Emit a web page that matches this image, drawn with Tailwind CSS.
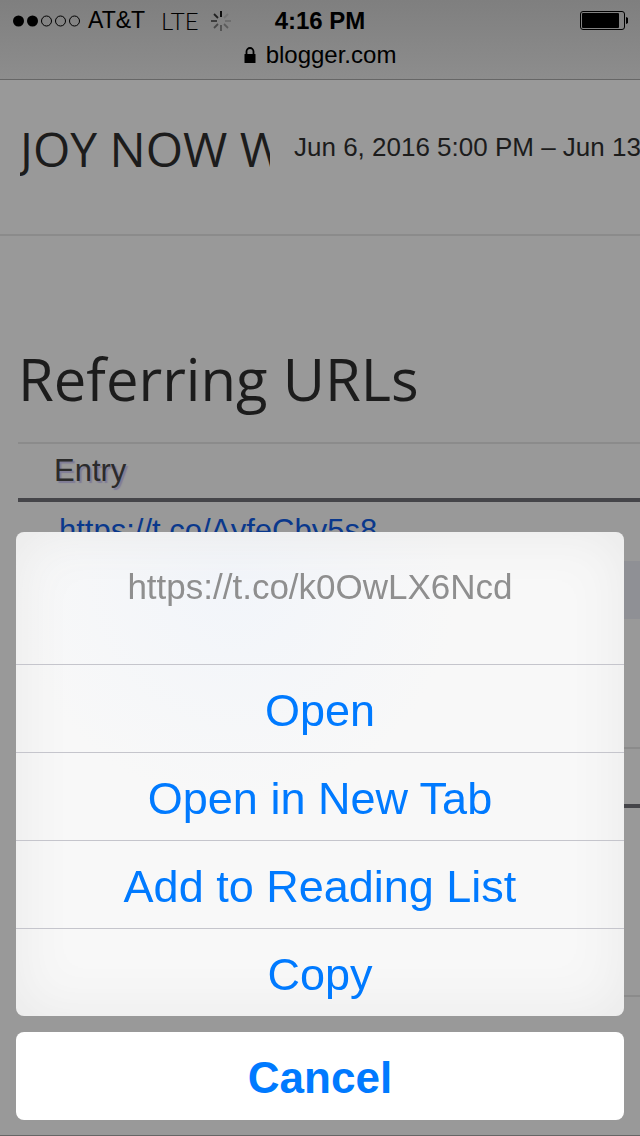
<!DOCTYPE html>
<html lang="en">
<head>
  <meta charset="UTF-8">
  <meta name="viewport" content="width=device-width, initial-scale=1">
  <title>Blogger Stats</title>
  <script src="https://cdn.jsdelivr.net/npm/@tailwindcss/browser@4"></script>
</head>
<body class="bg-[#999] font-['Liberation_Sans',Arial,sans-serif] text-[#1c1c1c] overflow-hidden">

  <div class="h-screen flex flex-col overflow-hidden">
    <!-- Status bar + address -->
    <header class="shrink-0 h-20 bg-linear-to-b from-[#7f7f7f] to-[#8d8d8d] border-b border-[#666] text-black text-2xl">
      <div class="grid grid-cols-[1fr_auto_1fr] items-center h-[41px] pl-3 pr-3">
        <div class="flex items-center">
          <svg class="w-[70px] h-3 mr-1.5" viewBox="0 0 70 12" fill="none" stroke="#000">
            <circle cx="6.5" cy="6" r="5.5" fill="#000" stroke="none"/>
            <circle cx="20.5" cy="6" r="5.5" fill="#000" stroke="none"/>
            <circle cx="34.5" cy="6" r="5"/>
            <circle cx="48.5" cy="6" r="5"/>
            <circle cx="62.5" cy="6" r="5"/>
          </svg>
          <span class="text-[23px]">AT&amp;T</span>
          <span class="ml-4 font-['Lato',sans-serif] font-light">LTE</span>
          <svg class="w-5 h-5 ml-3" viewBox="0 0 20 20" stroke="#000" stroke-width="1.8">
            <path d="M10 0v6"/>
            <path d="M17 3l-4 4" stroke-opacity=".12"/>
            <path d="M20 10h-6" stroke-opacity=".18"/>
            <path d="M17 17l-4-4" stroke-opacity=".3"/>
            <path d="M10 20v-6" stroke-opacity=".4"/>
            <path d="M3 17l4-4" stroke-opacity=".45"/>
            <path d="M0 10h6" stroke-opacity=".6"/>
            <path d="M3 3l4 4" stroke-opacity=".75"/>
          </svg>
        </div>
        <span class="font-bold">4:16 PM</span>
        <svg class="justify-self-end w-12 h-[19px]" viewBox="0 0 48 19">
          <rect x=".5" y=".5" width="44" height="18" rx="2.5" fill="none" stroke="#000"/>
          <rect x="2" y="2" width="37" height="15" rx="1" fill="#000"/>
          <path d="M46 6q3 1 3 3.500t-3 3.500z" fill="#000"/>
        </svg>
      </div>
      <div class="flex items-center justify-center gap-2.5 h-7">
        <svg class="w-3 h-4" viewBox="0 0 12 16">
          <path d="M2.500 8V4.500a3.500 3.500 0 0 1 7 0V8" fill="none" stroke="#000" stroke-width="1.800"/>
          <rect x=".5" y="7" width="11" height="9" rx=".5" fill="#000"/>
        </svg>
        <span>blogger.com</span>
      </div>
    </header>

    <!-- Stats page, dimmed -->
    <main class="flex-1 min-h-0 overflow-hidden">
      <div class="flex items-center h-[156px] pb-5 pl-5 border-b-2 border-[#8b8b8b]">
        <h1 class="w-[250px] shrink-0 overflow-hidden whitespace-nowrap pt-1 font-['Open_Sans',sans-serif] text-5xl leading-[80px]">JOY NOW WITH</h1>
        <p class="ml-6 whitespace-nowrap text-[26px]">Jun 6, 2016 5:00 PM – Jun 13, 2016 4:00 PM</p>
      </div>

      <h2 class="mt-[102px] ml-[18px] mb-[22px] font-['Open_Sans',sans-serif] text-[58px] leading-[82px]">Referring URLs</h2>

      <div class="pl-[18px]">
        <table class="w-full border-separate border-spacing-0 text-left">
          <thead>
            <tr class="h-[60px]">
              <th class="border-t-2 border-b-4 border-t-[#8b8b8b] border-b-[#454549] pl-9 font-normal text-[31px] text-[#2b2b2b] [text-shadow:2px_2px_1px_#7f7c96]">Entry</th>
              <th class="w-[7px] border-t-2 border-b-4 border-t-[#8b8b8b] border-b-[#454549]"></th>
            </tr>
          </thead>
          <tbody>
            <tr class="h-[59px]">
              <td class="pl-[41px] text-[31px]"><a href="#" class="text-[#0a388c]">https://t.co/AyfeCby5s8</a></td>
              <td></td>
            </tr>
            <tr class="h-[58px] bg-[#8f9095]">
              <td></td>
              <td></td>
            </tr>
          </tbody>
        </table>

        <table class="w-full mt-32 border-separate border-spacing-0">
          <thead>
            <tr class="h-[61px]">
              <th class="border-t-2 border-b-4 border-t-[#8b8b8b] border-b-[#454549]"></th>
              <th class="w-[7px] border-t-2 border-b-4 border-t-[#8b8b8b] border-b-[#454549]"></th>
            </tr>
          </thead>
          <tbody>
            <tr class="h-[189px]">
              <td class="border-b-2 border-[#8b8b8b]"></td>
              <td class="border-b-2 border-[#8b8b8b]"></td>
            </tr>
          </tbody>
        </table>
      </div>
    </main>
    <div class="h-px shrink-0 bg-[#666]"></div>
  </div>

  <!-- Action sheet -->
  <div role="dialog" aria-label="Link options" class="fixed inset-x-4 bottom-4 flex flex-col gap-4 text-center text-[45px] text-[#007aff]">
    <div class="rounded-lg overflow-hidden bg-[#f8f8f8] bg-[radial-gradient(circle_at_36%_10%,#f2f5fa,transparent_38%)] shadow-[inset_0_0_56px_#e8e8e8] divide-y divide-[#c5c5cc]">
      <p class="h-[133px] pt-[35px] text-[35px] leading-10 text-[#8f8f8f]">https://t.co/k0OwLX6Ncd</p>
      <button class="block w-full h-[88px] pt-1">Open</button>
      <button class="block w-full h-[88px] pt-1">Open in New Tab</button>
      <button class="block w-full h-[88px] pt-1">Add to Reading List</button>
      <button class="block w-full h-[87px] pt-1">Copy</button>
    </div>
    <button class="h-[88px] pt-1 rounded-lg bg-white text-[44px] font-bold">Cancel</button>
  </div>

</body>
</html>
